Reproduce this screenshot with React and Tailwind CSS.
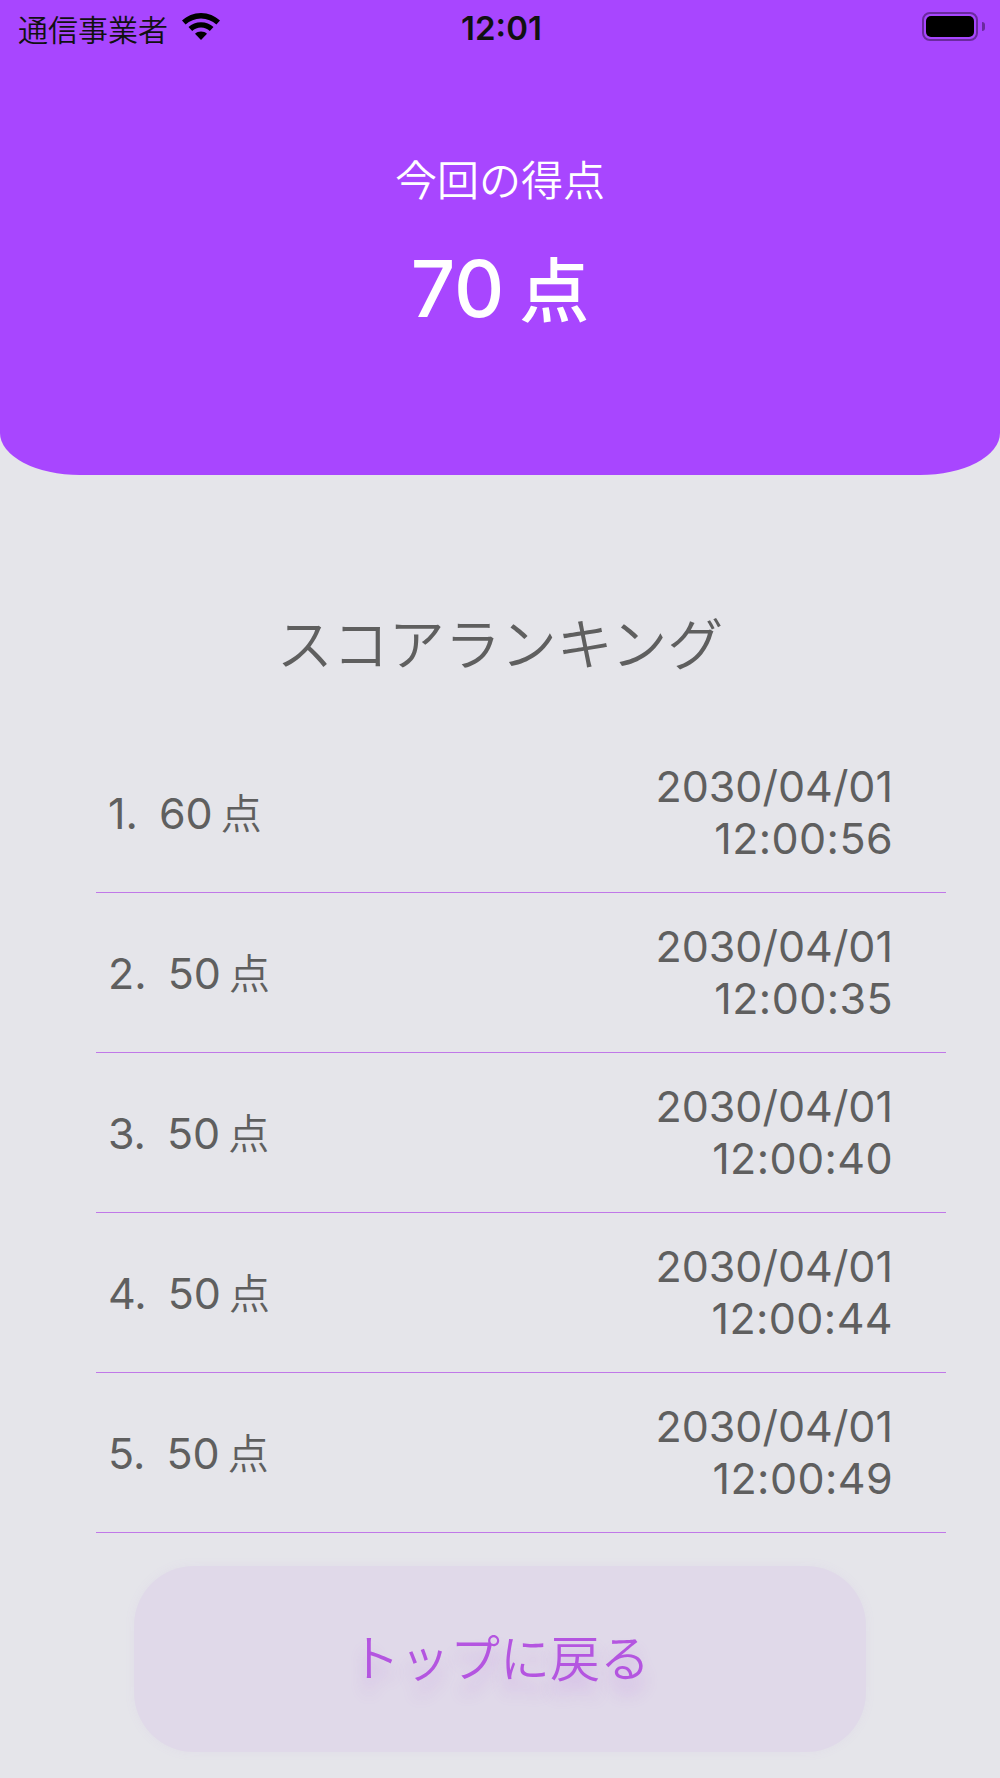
import React from 'react';

const rows = [
  { rank: '1.', score: '60', time: '12:00:56' },
  { rank: '2.', score: '50', time: '12:00:35' },
  { rank: '3.', score: '50', time: '12:00:40' },
  { rank: '4.', score: '50', time: '12:00:44' },
  { rank: '5.', score: '50', time: '12:00:49' },
];

const App = () => {
  return (
    <div className="w-[1000px] h-[1778px] overflow-hidden bg-[#e5e5ea] font-['Inter','Noto_Sans_CJK_JP',sans-serif]">
      {/* Header */}
      <div className="h-[475px] bg-[#a846ff] rounded-b-[80px_42px] flex flex-col items-center">
        <div className="w-full h-[56px] pl-[18px] pr-[15px] flex items-center justify-between text-[#111]">
          <div className="w-[300px] flex items-center gap-[13px]">
            <span className="text-[30px] leading-none font-['Noto_Sans_CJK_JP',sans-serif] font-[350]">通信事業者</span>
            <svg className="mb-[4px]" width="40" height="30" viewBox="0 0 40 30" fill="#000">
              <path d="M20 2C12.6 2 6 4.9 1 9.6l3.6 3.9C8.700 9.700 14 7.400 20 7.400s11.300 2.300 15.400 6.100L39 9.600C34 4.900 27.400 2 20 2z" />
              <path d="M20 11.200c-4.900 0-9.200 1.900-12.500 4.900l3.700 3.900c2.300-2.100 5.400-3.400 8.800-3.400s6.500 1.300 8.800 3.400l3.700-3.900c-3.300-3-7.600-4.900-12.500-4.900z" />
              <path d="M20 20.500c-2.400 0-4.500 .9-6 2.300L20 29l6-6.200c-1.500-1.400-3.600-2.300-6-2.300z" />
            </svg>
          </div>
          <span className="text-[33px] leading-none font-semibold">12:01</span>
          <div className="w-[300px] mb-[3px] flex items-center justify-end gap-[4px]">
            <div className="w-[56px] h-[29px] rounded-[8px] border-[2px] border-[#6a2a9e] p-[2px]">
              <div className="w-full h-full rounded-[5px] bg-black"></div>
            </div>
            <div className="w-[3px] h-[9px] rounded-r-sm bg-[#6a2a9e]"></div>
          </div>
        </div>
        <div className="mt-[101px] text-white text-[42px] leading-none font-['Noto_Sans_CJK_JP',sans-serif] font-[350]">今回の得点</div>
        <div className="mt-[51px] text-white leading-none flex items-baseline font-medium">
          <span className="text-[78px] leading-none">70</span>
          <span className="ml-[15px] text-[70px] leading-none font-['Noto_Sans_CJK_JP',sans-serif]">点</span>
        </div>
      </div>

      <div className="mt-[134px] text-center text-[#5f5f5f] text-[56px] leading-[64px] font-['Noto_Sans_CJK_JP',sans-serif] font-[350]">スコアランキング</div>

      {/* Ranking */}
      <div className="mx-[96px] w-[850px] mt-[60px]">
        {rows.map((row) => (
          <div key={row.rank} className="h-[160px] border-b border-[#c078e8] pl-[12px] pr-[53px] flex items-center justify-between text-[#5f5f5f]">
            <div className="flex items-baseline text-[43px] leading-none">
              <span>{row.rank}</span>
              <span className="ml-[21px]">{row.score}</span>
              <span className="ml-[8px] text-[41px] font-['Noto_Sans_CJK_JP',sans-serif] font-[350]">点</span>
            </div>
            <div className="text-right text-[43px] leading-[52px]">
              <div className="-mt-[1px]">2030/04/01</div>
              <div className="tracking-[0.4px]">{row.time}</div>
            </div>
          </div>
        ))}
      </div>

      <div className="mt-[33px] mx-[134px] w-[732px] h-[186px] pb-[8px] rounded-[60px] bg-[#e0d9e9] shadow-[0_0_12px_rgba(170,120,220,0.06)] flex items-center justify-center">
        <span className="text-[#b455e0] text-[50px] leading-none font-['Noto_Sans_CJK_JP',sans-serif] font-[350] [text-shadow:0_14px_16px_rgba(175,90,225,0.3)]">トップに戻る</span>
      </div>
    </div>
  );
};

export default App;
